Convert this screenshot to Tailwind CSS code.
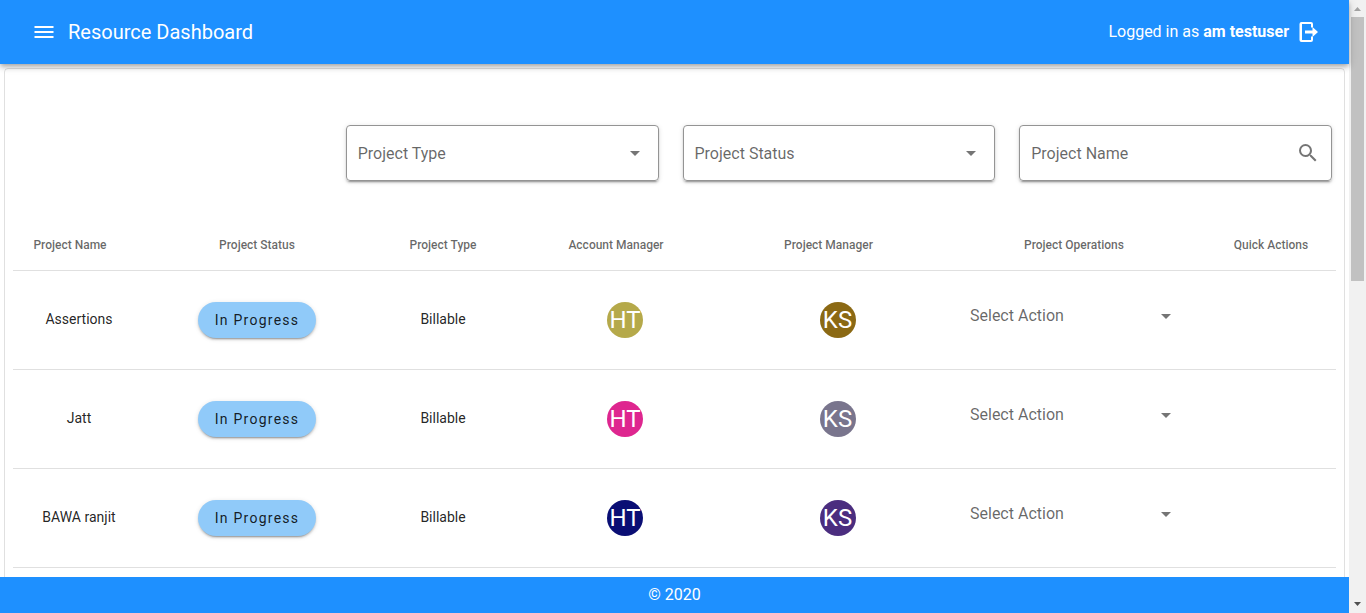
<!DOCTYPE html>
<html lang="en">
<head>
<meta charset="utf-8">
<title>Resource Dashboard</title>
<script src="https://cdn.jsdelivr.net/npm/@tailwindcss/browser@4"></script>
</head>
<body class="flex h-screen overflow-hidden bg-white font-['Roboto',sans-serif] text-black/87">
<svg class="hidden">
  <symbol id="caret" viewBox="0 0 24 24"><path d="M7 10l5 5 5-5z" fill="currentColor"/></symbol>
</svg>

<div class="flex min-w-0 flex-1 flex-col">
  <header class="z-10 flex h-16 shrink-0 items-center bg-[#1e90ff] pr-7 pl-8 text-white shadow-[0_2px_4px_-1px_rgba(0,0,0,0.2),0_4px_5px_0_rgba(0,0,0,0.14),0_1px_10px_0_rgba(0,0,0,0.12)]">
    <button type="button" aria-label="Menu" class="mr-3">
      <svg class="size-6" viewBox="0 0 24 24" fill="currentColor"><path d="M2.500 6h19v2h-19V6m0 5h19v2h-19v-2m0 5h19v2h-19v-2z"/></svg>
    </button>
    <h1 class="text-xl">Resource Dashboard</h1>
    <p class="ml-auto">Logged in as <strong class="font-bold">am testuser</strong></p>
    <button type="button" aria-label="Log out" class="ml-2">
      <svg class="size-6" viewBox="0 0 24 24" fill="currentColor"><path d="M4.500 2H14a2 2 0 0 1 2 2v3.500h-2V4H5v16h9v-3.500h2V20a2 2 0 0 1-2 2H4.500a2 2 0 0 1-2-2V4a2 2 0 0 1 2-2z"/><path d="M8 10.500h7.500V7l5.500 5-5.500 5v-3.500H8z"/></svg>
    </button>
  </header>

  <main class="min-h-0 flex-1 overflow-hidden px-1 pt-1">
    <div class="rounded border border-black/12 pb-12">
      <form class="grid grid-cols-4 gap-6 pt-14 pr-3 pl-1">
        <label class="relative col-start-2 flex h-14 items-center rounded border border-[#949494] shadow-[0_3px_1px_-2px_rgba(0,0,0,0.2),0_2px_2px_0_rgba(0,0,0,0.14),0_1px_5px_0_rgba(0,0,0,0.12)]">
          <select aria-label="Project Type" class="h-full w-full appearance-none px-[11px] pt-0.5 text-black/60 outline-none"><option>Project Type</option></select>
          <svg class="pointer-events-none absolute right-[11px] size-6 text-black/54"><use href="#caret"/></svg>
        </label>
        <label class="relative flex h-14 items-center rounded border border-[#949494] shadow-[0_3px_1px_-2px_rgba(0,0,0,0.2),0_2px_2px_0_rgba(0,0,0,0.14),0_1px_5px_0_rgba(0,0,0,0.12)]">
          <select aria-label="Project Status" class="h-full w-full appearance-none px-[11px] pt-0.5 text-black/60 outline-none"><option>Project Status</option></select>
          <svg class="pointer-events-none absolute right-[11px] size-6 text-black/54"><use href="#caret"/></svg>
        </label>
        <label class="flex h-14 items-center rounded border border-[#949494] pr-[11px] shadow-[0_3px_1px_-2px_rgba(0,0,0,0.2),0_2px_2px_0_rgba(0,0,0,0.14),0_1px_5px_0_rgba(0,0,0,0.12)]">
          <input type="text" aria-label="Project Name" placeholder="Project Name" class="h-full min-w-0 flex-1 px-[11px] outline-none placeholder:text-black/60">
          <svg class="size-6 text-black/54" viewBox="0 0 24 24" fill="currentColor"><path d="M9.500 3A6.500 6.500 0 0 1 16 9.500c0 1.610-.59 3.090-1.560 4.230l.27.27h.79l5 5-1.500 1.500-5-5v-.79l-.27-.27A6.516 6.516 0 0 1 9.500 16 6.500 6.500 0 0 1 3 9.500 6.500 6.500 0 0 1 9.500 3m0 2C7 5 5 7 5 9.500S7 14 9.500 14 14 12 14 9.500 12 5 9.500 5z"/></svg>
        </label>
      </form>

      <div class="mt-10 px-2">
        <table class="w-full table-fixed text-center text-sm">
          <colgroup>
            <col class="w-[132px]"><col class="w-[224px]"><col class="w-[148px]"><col class="w-[216px]"><col class="w-[209px]"><col class="w-[264px]"><col class="w-[130px]">
          </colgroup>
          <thead class="text-xs text-black/60">
            <tr class="h-[49px] border-b border-black/12">
              <th class="pr-[18px] font-medium">Project Name</th>
              <th class="font-medium">Project Status</th>
              <th class="font-medium">Project Type</th>
              <th class="pr-[18px] font-medium">Account Manager</th>
              <th class="pr-[18px] font-medium">Project Manager</th>
              <th class="font-medium">Project Operations</th>
              <th class="font-medium">Quick Actions</th>
            </tr>
          </thead>
          <tbody>
            <tr class="h-[99px] border-b border-black/12">
              <td class="pb-0.5">Assertions</td>
              <td><button type="button" class="h-9 w-[118px] rounded-full bg-[#90caf9] tracking-[1.25px] shadow-[0_3px_1px_-2px_rgba(0,0,0,0.2),0_2px_2px_0_rgba(0,0,0,0.14),0_1px_5px_0_rgba(0,0,0,0.12)]">In Progress</button></td>
              <td class="pb-0.5">Billable</td>
              <td><span class="mx-auto flex size-9 items-center justify-center rounded-full bg-[#b5a94a] text-2xl text-white">HT</span></td>
              <td><span class="mx-auto flex size-9 items-center justify-center rounded-full bg-[#8b6914] text-2xl text-white">KS</span></td>
              <td><label class="relative mx-auto mb-2 flex w-52 items-center"><select aria-label="Select Action" class="w-full appearance-none text-base text-black/60 outline-none"><option>Select Action</option></select><svg class="pointer-events-none absolute right-0 size-6 text-black/54"><use href="#caret"/></svg></label></td>
              <td></td>
            </tr>
            <tr class="h-[99px] border-b border-black/12">
              <td class="pb-0.5">Jatt</td>
              <td><button type="button" class="h-9 w-[118px] rounded-full bg-[#90caf9] tracking-[1.25px] shadow-[0_3px_1px_-2px_rgba(0,0,0,0.2),0_2px_2px_0_rgba(0,0,0,0.14),0_1px_5px_0_rgba(0,0,0,0.12)]">In Progress</button></td>
              <td class="pb-0.5">Billable</td>
              <td><span class="mx-auto flex size-9 items-center justify-center rounded-full bg-[#de268f] text-2xl text-white">HT</span></td>
              <td><span class="mx-auto flex size-9 items-center justify-center rounded-full bg-[#79758d] text-2xl text-white">KS</span></td>
              <td><label class="relative mx-auto mb-2 flex w-52 items-center"><select aria-label="Select Action" class="w-full appearance-none text-base text-black/60 outline-none"><option>Select Action</option></select><svg class="pointer-events-none absolute right-0 size-6 text-black/54"><use href="#caret"/></svg></label></td>
              <td></td>
            </tr>
            <tr class="h-[99px] border-b border-black/12">
              <td class="pb-0.5">BAWA ranjit</td>
              <td><button type="button" class="h-9 w-[118px] rounded-full bg-[#90caf9] tracking-[1.25px] shadow-[0_3px_1px_-2px_rgba(0,0,0,0.2),0_2px_2px_0_rgba(0,0,0,0.14),0_1px_5px_0_rgba(0,0,0,0.12)]">In Progress</button></td>
              <td class="pb-0.5">Billable</td>
              <td><span class="mx-auto flex size-9 items-center justify-center rounded-full bg-[#0a0e74] text-2xl text-white">HT</span></td>
              <td><span class="mx-auto flex size-9 items-center justify-center rounded-full bg-[#4b2d7f] text-2xl text-white">KS</span></td>
              <td><label class="relative mx-auto mb-2 flex w-52 items-center"><select aria-label="Select Action" class="w-full appearance-none text-base text-black/60 outline-none"><option>Select Action</option></select><svg class="pointer-events-none absolute right-0 size-6 text-black/54"><use href="#caret"/></svg></label></td>
              <td></td>
            </tr>
          </tbody>
        </table>
      </div>
    </div>
  </main>

  <footer class="flex h-9 shrink-0 items-center justify-center bg-[#1e90ff] text-white">© 2020</footer>
</div>

<!-- page scrollbar -->
<div class="flex w-[17px] shrink-0 flex-col items-center bg-[#f1f1f1]" aria-hidden="true">
  <svg class="h-[17px] w-full shrink-0" viewBox="0 0 17 17"><path d="M5 11l3.500-4 3.500 4z" fill="#a3a3a3"/></svg>
  <div class="h-[43%] w-[13px] bg-[#c1c1c1]"></div>
  <svg class="mt-auto h-[17px] w-full shrink-0" viewBox="0 0 17 17"><path d="M5 6l3.500 4L12 6z" fill="#505050"/></svg>
</div>
</body>
</html>
